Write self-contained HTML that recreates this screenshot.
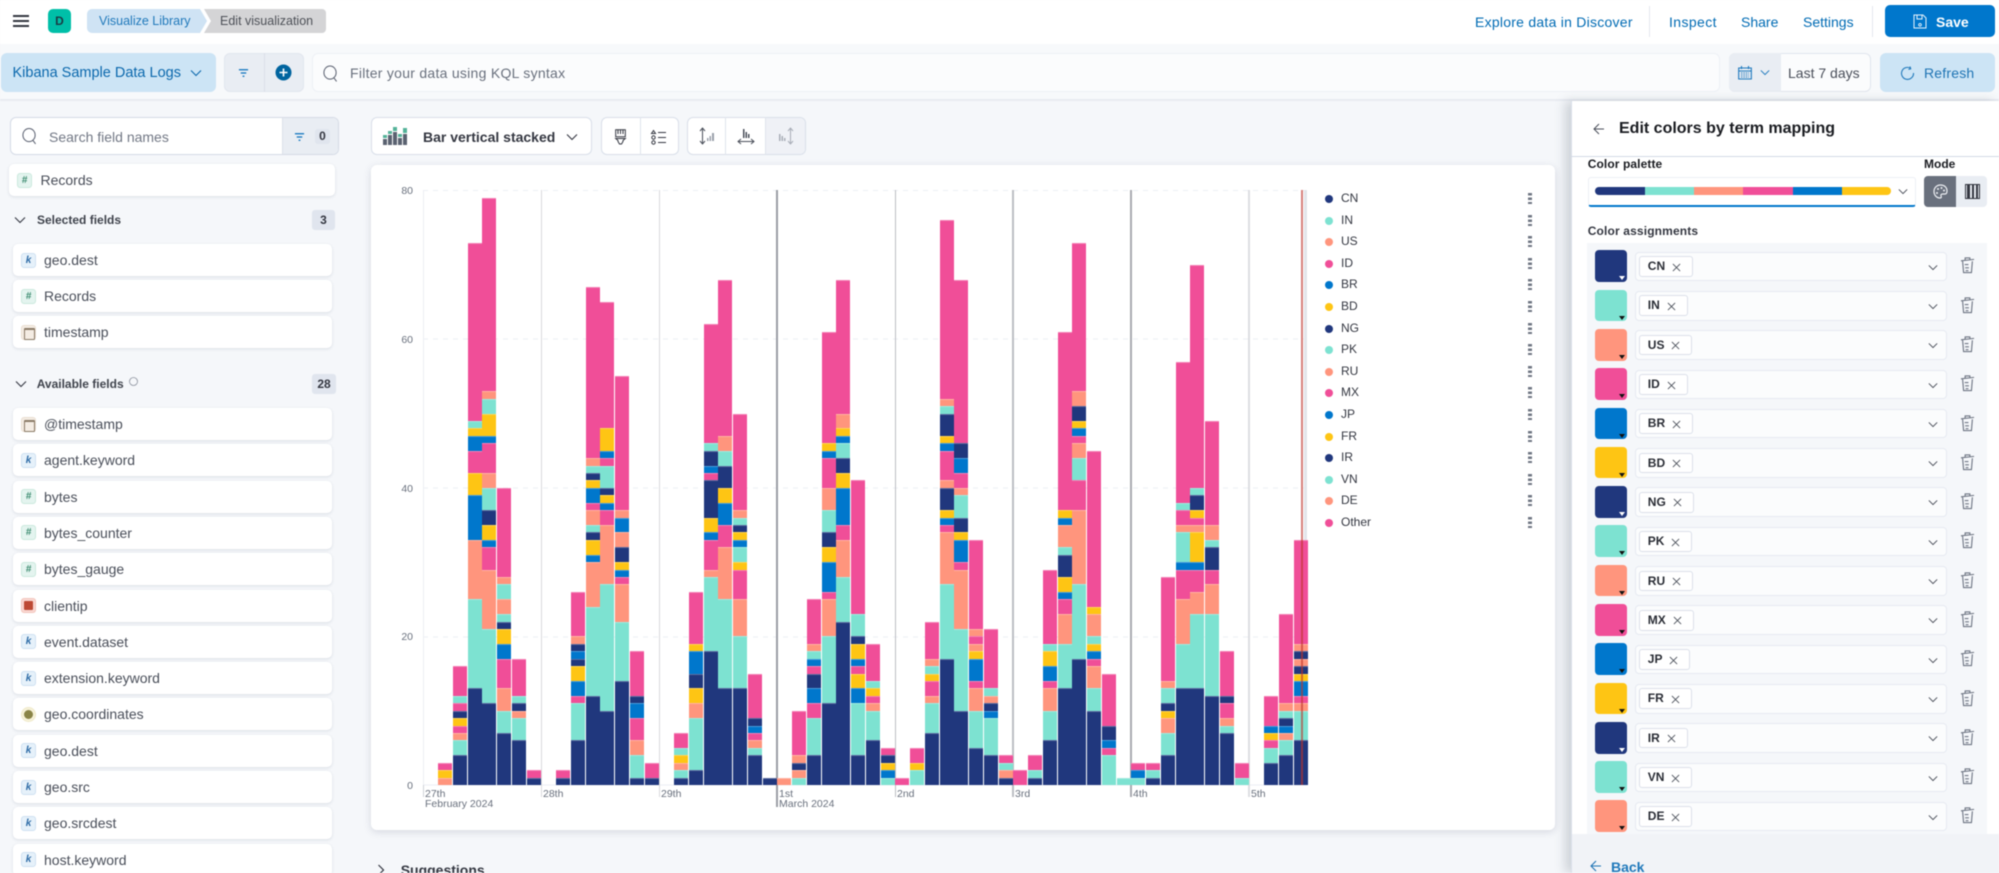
<!DOCTYPE html>
<html lang="en"><head><meta charset="utf-8"><title>Edit visualization</title>
<style>
*{box-sizing:border-box}
html,body{margin:0;padding:0;width:1999px;height:873px;overflow:hidden;background:#f5f7fa}
body{font-family:"Liberation Sans",sans-serif;color:#343741;position:relative}
#p{position:absolute;left:0;top:0;width:1999px;height:873px;overflow:hidden;filter:blur(.4px)}
.a{position:absolute}
.t{position:absolute;white-space:nowrap;line-height:1;transform:translateY(-50%)}
.lnk{color:#006bb4;font-size:14px}
svg{position:absolute;overflow:visible}
.bx{position:absolute;background:#fff;border:1px solid #d9dfe9;border-radius:6px}
.card{position:absolute;left:12.5px;width:319px;height:32px;background:#fff;border-radius:5px;box-shadow:0 1px 3px rgba(60,70,100,.14);font-size:14px;color:#4a4f5a}
.nm{position:absolute;left:31.5px;top:50%;transform:translateY(-50%);white-space:nowrap}
.fi{position:absolute;left:8.5px;top:8.5px;width:15px;height:15px;border-radius:3px;font-size:10px;font-weight:bold;font-style:italic;text-align:center;line-height:14px;border:1px solid}
.k{background:#e6f1fa;border-color:#cfe1f2;color:#2d6ba6}
.h{background:#e4f4ef;border-color:#cbe9de;color:#3b8b6f}
.d{background:#f4ece3;border-color:#eadfd2}
.d:after{content:"";position:absolute;left:2px;top:2px;width:9px;height:9px;border:1.2px solid #8a7a66;border-top-width:2.5px;border-radius:1px}
.ip{background:#f9d8d2;border-color:#f3c5bd}
.ip:after{content:"";position:absolute;left:2px;top:2px;width:9px;height:9px;background:#bd4a35;border-radius:1px}
.g{background:#f7f2da;border-color:#efe9c8;border-radius:50%}
.g:after{content:"";position:absolute;left:2px;top:2px;width:9px;height:9px;background:#8a8447;border-radius:50%}
.b{position:absolute;left:calc(423.3px + var(--s)*14.75px);bottom:88px;width:14.2px;display:flex;flex-direction:column-reverse}
.b i{display:block;flex:none;height:calc(var(--h)*7.43px);border-top:1px solid rgba(255,255,255,.28)}
.n{background:#20377d}.e{background:#7de2d1}.o{background:#ff957d}.q{background:#f04e98}.u{background:#0077cc}.y{background:#fec514}
.dl{position:absolute;top:190px;width:1.3px}
.ax{position:absolute;font-size:10.5px;color:#69707d;white-space:nowrap;line-height:1;transform:translateY(-50%)}
#lg{position:absolute;left:1325px;top:188px;width:210px;display:grid;grid-auto-rows:21.6px;font-size:12px;color:#343741}
#lg div{position:relative;line-height:21.6px;padding-left:16px}
#lg i{position:absolute;left:0;top:7px;width:8px;height:8px;border-radius:50%}
#lg b{position:absolute;left:202.5px;top:5px;width:4px;height:12px;background:repeating-linear-gradient(#6f7683 0 2.4px,transparent 2.4px 4.4px)}
.r{position:absolute;left:1595px;width:390px;height:32px}
.sw{position:absolute;left:0;top:0;width:32px;height:31.7px;border-radius:4px}
.sw:after{content:"";position:absolute;left:23.5px;top:26px;border:3px solid transparent;border-top:4px solid #111;border-bottom:0}
.sw.n:after{border-top-color:#fff}
.cb{position:absolute;left:40.3px;top:1.4px;width:312px;height:29.6px;background:#fbfcfd;border:1px solid #e6eaf1;border-radius:4px}
.ch{position:absolute;left:3px;top:3.5px;height:20.7px;background:#fff;border:1px solid #dbe0ea;border-radius:3px;font-size:12px;font-weight:bold;color:#2a2d35;line-height:19px;padding:0 27px 0 7.5px}
</style></head><body><div id="p">
<svg width="0" height="0" style="position:absolute"><defs>
<symbol id="cv" viewBox="0 0 12 8"><path d="M1 1.5l5 5 5-5" fill="none" stroke="currentColor" stroke-width="1.1"/></symbol>
<symbol id="xx" viewBox="0 0 10 10"><path d="M1 1l8 8M9 1l-8 8" fill="none" stroke="#4f545e" stroke-width="1"/></symbol>
<symbol id="tr" viewBox="0 0 16 18"><path d="M1 4.5l14-1.5M5.5 3.6V1.4h5v1.6M2.8 5l1 12h8.4l1-12M5 8.5h4M5.5 12h4M6 15h3" fill="none" stroke="#6f7684" stroke-width="1.2"/></symbol>
<symbol id="se" viewBox="0 0 16 18"><ellipse cx="7.5" cy="8" rx="6.5" ry="7" fill="none" stroke="#5a6070" stroke-width="1.1"/><path d="M11.5 13.5l3 4" stroke="#5a6070" stroke-width="1.1"/></symbol>
<symbol id="fl" viewBox="0 0 12 10"><path d="M1 1.5h10M3 5h6M5 8.5h2" stroke="#0a72bd" stroke-width="1.4" fill="none"/></symbol>
</defs></svg>

<!-- top bar -->
<div class="a" style="left:0;top:0;width:1999px;height:44px;background:#fff;box-shadow:0 1px 4px rgba(60,70,100,.25)"></div>
<svg style="left:12.5px;top:15px" width="16" height="12"><path d="M0 1h16M0 6h16M0 11h16" stroke="#343741" stroke-width="2"/></svg>
<div class="a" style="left:48px;top:9px;width:23px;height:24px;background:#00bfa8;border-radius:5px;font-size:12px;font-weight:bold;text-align:center;line-height:24px;color:#1a3a44">D</div>
<svg style="left:87px;top:9px" width="240" height="24"><path d="M5 0H113L120 12L113 24H5a5 5 0 0 1-5-5V5a5 5 0 0 1 5-5z" fill="#cfe3f4"/><path d="M117 0H235a4 4 0 0 1 4 4V20a4 4 0 0 1-4 4H117L124 12z" fill="#d4d4d6"/></svg>
<div class="t" style="left:99px;top:21px;font-size:12.5px;color:#2079bb">Visualize Library</div>
<div class="t" style="left:220px;top:21px;font-size:12.5px;color:#4d5057">Edit visualization</div>
<div class="t lnk" style="left:1475px;top:21.5px;letter-spacing:.25px">Explore data in Discover</div>
<div class="a" style="left:1649px;top:6px;width:1px;height:31px;background:#e3e7ee"></div>
<div class="t lnk" style="left:1669px;top:21.5px;letter-spacing:.4px">Inspect</div>
<div class="t lnk" style="left:1741px;top:21.5px">Share</div>
<div class="t lnk" style="left:1803px;top:21.5px">Settings</div>
<div class="a" style="left:1872px;top:6px;width:1px;height:31px;background:#e3e7ee"></div>
<div class="a" style="left:1885px;top:5px;width:110px;height:32px;background:#0077cc;border-radius:5px"></div>
<svg style="left:1913px;top:14px" width="14" height="15"><path d="M1 1h9l3 3v10H1zM4 1v4h5V1M7 9.5a1.3 1.3 0 1 0 .01 0" fill="none" stroke="#e8f3fb" stroke-width="1"/></svg>
<div class="t" style="left:1936px;top:21.5px;font-size:14px;font-weight:bold;color:#fff">Save</div>

<!-- query bar -->
<div class="a" style="left:0;top:44px;width:1999px;height:57px;background:#f7f9fb;border-bottom:2px solid #e8ebf1"></div>
<div class="a" style="left:1px;top:53px;width:215px;height:39px;background:#cce4f5;border-radius:6px"></div>
<div class="t" style="left:12.5px;top:73px;font-size:14.5px;color:#0b68ad">Kibana Sample Data Logs</div>
<svg style="left:190px;top:69px;color:#0b68ad" width="12" height="8"><use href="#cv"/></svg>
<div class="a" style="left:224px;top:53px;width:80px;height:39px;background:#e9edf3;border:1px solid #e1e6ee;border-radius:6px"></div>
<div class="a" style="left:264px;top:53px;width:1px;height:39px;background:#dbe0e9"></div>
<svg style="left:238px;top:68px" width="11" height="10"><use href="#fl"/></svg>
<svg style="left:275px;top:64px" width="17" height="17"><circle cx="8.5" cy="8.5" r="8" fill="#00649f"/><path d="M8.5 4.5v8M4.5 8.5h8" stroke="#fff" stroke-width="1.6"/></svg>
<div class="a" style="left:312px;top:53px;width:1408px;height:39px;background:#fbfcfd;border:1px solid #eef1f6;border-radius:6px"></div>
<svg style="left:323px;top:65px" width="15" height="17"><use href="#se"/></svg>
<div class="t" style="left:350px;top:73px;font-size:14px;color:#69707d;letter-spacing:.27px">Filter your data using KQL syntax</div>
<div class="a" style="left:1729px;top:53px;width:142px;height:39px;background:#fbfcfd;border:1px solid #e1e6ee;border-radius:6px"></div>
<div class="a" style="left:1729px;top:53px;width:52px;height:39px;background:#e9edf3;border-radius:6px 0 0 6px"></div>
<svg style="left:1738px;top:65px" width="14" height="15"><path d="M.7 3h12.6v11H.7zM.7 6h12.6M3.5 1v3M10.5 1v3" fill="none" stroke="#1c78bd" stroke-width="1.1"/><path d="M3 8h8M3 10h8M3 12h8" stroke="#1c78bd" stroke-dasharray="1.4 1"/></svg>
<svg style="left:1760px;top:69px;color:#1c78bd" width="10" height="7"><use href="#cv"/></svg>
<div class="t" style="left:1788px;top:73px;font-size:14px;color:#4a4f5a">Last 7 days</div>
<div class="a" style="left:1880px;top:53px;width:115px;height:39px;background:#cce4f5;border-radius:6px"></div>
<svg style="left:1901px;top:66px" width="13" height="14"><path d="M9.5 2.2A6 6 0 1 0 12.5 7M9 .5l.7 2.3-2.3.6" fill="none" stroke="#2079bb" stroke-width="1.1"/></svg>
<div class="t" style="left:1924px;top:73px;font-size:14px;color:#1f74b4;letter-spacing:.2px">Refresh</div>

<!-- left panel -->
<div class="bx" style="left:10px;top:117px;width:329px;height:38px;overflow:hidden;border-color:#d5dbe6"><div class="a" style="left:271px;top:0;width:58px;height:38px;background:#e9edf3;border-left:1px solid #dde2ea"></div></div>
<svg style="left:22px;top:127px" width="15" height="18"><use href="#se"/></svg>
<div class="t" style="left:49px;top:136.5px;font-size:14px;color:#727885">Search field names</div>
<svg style="left:294px;top:132px" width="11" height="10"><use href="#fl"/></svg>
<div class="a" style="left:315px;top:129px;width:15px;height:15px;background:#e0e5ee;border-radius:3px;font-size:12px;font-weight:bold;text-align:center;line-height:15px;color:#343741">0</div>

<div class="card" style="left:9px;top:164px;width:326px"><span class="fi h" style="left:8px">#</span><span class="nm">Records</span></div>
<svg style="left:14px;top:216px;color:#343741" width="12" height="8"><use href="#cv"/></svg>
<div class="t" style="left:37px;top:219.5px;font-size:12px;font-weight:bold;color:#3f434c">Selected fields</div>
<div class="a" style="left:312px;top:210px;width:23px;height:20px;background:#e0e5ee;border-radius:3px;font-size:12px;font-weight:bold;text-align:center;line-height:20px">3</div>
<div class="card" style="top:244px"><span class="fi k">k</span><span class="nm">geo.dest</span></div>
<div class="card" style="top:280px"><span class="fi h">#</span><span class="nm">Records</span></div>
<div class="card" style="top:316.4px"><span class="fi d"></span><span class="nm">timestamp</span></div>
<svg style="left:14.5px;top:380px;color:#343741" width="12" height="8"><use href="#cv"/></svg>
<div class="t" style="left:36.7px;top:383.5px;font-size:12px;font-weight:bold;color:#3f434c">Available fields</div>
<svg style="left:129px;top:377px" width="9" height="9"><circle cx="4.5" cy="4.5" r="4" fill="none" stroke="#8a909c" stroke-width=".8"/></svg>
<div class="a" style="left:312px;top:374px;width:24px;height:20px;background:#e0e5ee;border-radius:3px;font-size:12px;font-weight:bold;text-align:center;line-height:20px">28</div>
<div class="card" style="top:408px"><span class="fi d"></span><span class="nm">@timestamp</span></div>
<div class="card" style="top:444.3px"><span class="fi k">k</span><span class="nm">agent.keyword</span></div>
<div class="card" style="top:480.6px"><span class="fi h">#</span><span class="nm">bytes</span></div>
<div class="card" style="top:516.9px"><span class="fi h">#</span><span class="nm">bytes_counter</span></div>
<div class="card" style="top:553.2px"><span class="fi h">#</span><span class="nm">bytes_gauge</span></div>
<div class="card" style="top:589.5px"><span class="fi ip"></span><span class="nm">clientip</span></div>
<div class="card" style="top:625.8px"><span class="fi k">k</span><span class="nm">event.dataset</span></div>
<div class="card" style="top:662.1px"><span class="fi k">k</span><span class="nm">extension.keyword</span></div>
<div class="card" style="top:698.4px"><span class="fi g"></span><span class="nm">geo.coordinates</span></div>
<div class="card" style="top:734.7px"><span class="fi k">k</span><span class="nm">geo.dest</span></div>
<div class="card" style="top:771px"><span class="fi k">k</span><span class="nm">geo.src</span></div>
<div class="card" style="top:807.3px"><span class="fi k">k</span><span class="nm">geo.srcdest</span></div>
<div class="card" style="top:843.6px"><span class="fi k">k</span><span class="nm">host.keyword</span></div>

<!-- toolbar -->
<div class="bx" style="left:371px;top:117px;width:221px;height:38px"></div>
<svg style="left:383px;top:127px" width="24" height="18"><path d="M0 8h4v3H0zM5 4h4v3H5zM10 0h4v4h-4zM15 7h4v3h-4zM20 1h4v5h-4z" fill="#54b399"/><path d="M0 12h4v6H0zM5 8h4v10H5zM10 5h4v13h-4zM15 11h4v7h-4zM20 7h4v11h-4z" fill="#5a6270"/></svg>
<div class="t" style="left:423px;top:136.5px;font-size:14px;font-weight:bold;color:#343741">Bar vertical stacked</div>
<svg style="left:566px;top:133px;color:#343741" width="12" height="8"><use href="#cv"/></svg>
<div class="bx" style="left:601px;top:117px;width:78px;height:38px"></div>
<div class="a" style="left:640px;top:117px;width:1px;height:38px;background:#dfe4ec"></div>
<svg style="left:615px;top:129px" width="11" height="16"><path d="M.7.7h9.6v7H.7zM.7 9.5h9.6L8 11.5v1L6.5 15h-2L3 12.5v-1z" fill="none" stroke="#343741" stroke-width="1"/><path d="M3 1v4M5.5 1v4M8 1v4" stroke="#343741"/></svg>
<svg style="left:651px;top:130px" width="16" height="15"><circle cx="2.5" cy="7.5" r="1.7" fill="none" stroke="#343741"/><circle cx="2.5" cy="12.5" r="1.7" fill="none" stroke="#343741"/><path d="M2.5.5l2 3h-4zM7 2.5h8M7 7.5h8M7 12.5h8" fill="none" stroke="#343741"/></svg>
<div class="bx" style="left:687px;top:117px;width:119px;height:38px;overflow:hidden"><div class="a" style="left:78px;top:0;width:41px;height:38px;background:#eff1f6"></div></div>
<div class="a" style="left:725px;top:117px;width:1px;height:38px;background:#dfe4ec"></div>
<div class="a" style="left:765px;top:117px;width:1px;height:38px;background:#dfe4ec"></div>
<svg style="left:699px;top:127px" width="18" height="18"><path d="M3.5 1.5v15M1 4l2.5-3L6 4M1 14l2.5 3L6 14" fill="none" stroke="#4a4f5a"/><path d="M8 11h1.5v3H8zM10.5 9H12v5h-1.500zM13 6h2v8h-2z" fill="#9aa0ab"/></svg>
<svg style="left:737px;top:128px" width="18" height="18"><path d="M1 13.500h16M4 11l-3 2.500L4 16M14 11l3 2.500L14 16" fill="none" stroke="#4a4f5a"/><path d="M6 1h1.500v9H6zM8.500 4H10v6H8.500zM11 6h1.500v4H11z" fill="#4a4f5a"/></svg>
<svg style="left:778px;top:127px" width="18" height="18"><path d="M12.500 1.500v15M10 4l2.500-3L15 4M10 14l2.500 3L15 14" fill="none" stroke="#a8adb7"/><path d="M1 7h1.500v7H1zM3.500 9H5v5H3.500zM6 11h1.500v3H6z" fill="#a8adb7"/></svg>

<!-- chart panel -->
<div class="a" style="left:371px;top:165px;width:1184px;height:665px;background:#fff;border-radius:6px;box-shadow:0 2px 8px rgba(70,80,110,.18)"></div>
<svg style="left:0;top:0" width="1999" height="873">
<path d="M423 190.500H1307M423 339H1307M423 488H1307M423 637H1307" stroke="#edeff4" stroke-dasharray="5 5"/>
<path d="M423.500 190V785" stroke="#eceef3"/><path d="M423 785H1307" stroke="#eceef3"/>
</svg>
<div class="a" style="left:423px;top:785px;width:1px;height:12px;background:#cfd2d8"></div>
<div class="dl" style="left:540.800px;height:607px;background:#d9d9dc"></div>
<div class="dl" style="left:658.700px;height:607px;background:#d9d9dc"></div>
<div class="dl" style="left:776.400px;height:617px;background:#9b9ea5"></div>
<div class="dl" style="left:894.500px;height:607px;background:#bcbec3"></div>
<div class="dl" style="left:1012.400px;height:607px;background:#bcbec3"></div>
<div class="dl" style="left:1130.400px;height:607px;background:#a9abb1"></div>
<div class="dl" style="left:1248.400px;height:607px;background:#dddee2"></div>
<div class="a" style="left:1304px;top:190px;width:3px;height:360px;background:#e3e5ea"></div>

<div class="ax" style="right:1586px;top:191px">80</div>
<div class="ax" style="right:1586px;top:340px">60</div>
<div class="ax" style="right:1586px;top:488.500px">40</div>
<div class="ax" style="right:1586px;top:637px">20</div>
<div class="ax" style="right:1586px;top:786px">0</div>
<div class="ax" style="left:425px;top:793.500px">27th</div>
<div class="ax" style="left:425px;top:803.500px">February 2024</div>
<div class="ax" style="left:543px;top:793.500px">28th</div>
<div class="ax" style="left:661px;top:793.500px">29th</div>
<div class="ax" style="left:779px;top:793.500px">1st</div>
<div class="ax" style="left:779px;top:803.500px">March 2024</div>
<div class="ax" style="left:897px;top:793.500px">2nd</div>
<div class="ax" style="left:1015px;top:793.500px">3rd</div>
<div class="ax" style="left:1133px;top:793.500px">4th</div>
<div class="ax" style="left:1251px;top:793.500px">5th</div>

<!-- bars -->
<div class="b" style="--s:1"><i class="o" style="--h:1"></i><i class="y" style="--h:1"></i><i class="q" style="--h:1"></i></div>
<div class="b" style="--s:2"><i class="n" style="--h:4"></i><i class="e" style="--h:2"></i><i class="o" style="--h:1"></i><i class="q" style="--h:1"></i><i class="y" style="--h:1"></i><i class="n" style="--h:1"></i><i class="q" style="--h:1"></i><i class="e" style="--h:1"></i><i class="q" style="--h:4"></i></div>
<div class="b" style="--s:3"><i class="n" style="--h:13"></i><i class="e" style="--h:12"></i><i class="o" style="--h:8"></i><i class="u" style="--h:6"></i><i class="y" style="--h:3"></i><i class="q" style="--h:3"></i><i class="u" style="--h:2"></i><i class="y" style="--h:1"></i><i class="e" style="--h:1"></i><i class="q" style="--h:24"></i></div>
<div class="b" style="--s:4"><i class="n" style="--h:11"></i><i class="e" style="--h:10"></i><i class="o" style="--h:8"></i><i class="q" style="--h:3"></i><i class="u" style="--h:1"></i><i class="y" style="--h:2"></i><i class="n" style="--h:2"></i><i class="e" style="--h:3"></i><i class="o" style="--h:2"></i><i class="q" style="--h:4"></i><i class="u" style="--h:1"></i><i class="y" style="--h:3"></i><i class="e" style="--h:2"></i><i class="o" style="--h:1"></i><i class="q" style="--h:26"></i></div>
<div class="b" style="--s:5"><i class="n" style="--h:7"></i><i class="e" style="--h:3"></i><i class="o" style="--h:3"></i><i class="q" style="--h:4"></i><i class="u" style="--h:2"></i><i class="y" style="--h:2"></i><i class="n" style="--h:1"></i><i class="e" style="--h:1"></i><i class="o" style="--h:2"></i><i class="e" style="--h:2"></i><i class="o" style="--h:1"></i><i class="q" style="--h:12"></i></div>
<div class="b" style="--s:6"><i class="n" style="--h:6"></i><i class="e" style="--h:3"></i><i class="o" style="--h:1"></i><i class="n" style="--h:1"></i><i class="e" style="--h:1"></i><i class="q" style="--h:5"></i></div>
<div class="b" style="--s:7"><i class="n" style="--h:1"></i><i class="q" style="--h:1"></i></div>
<div class="b" style="--s:9"><i class="n" style="--h:1"></i><i class="q" style="--h:1"></i></div>
<div class="b" style="--s:10"><i class="n" style="--h:6"></i><i class="e" style="--h:5"></i><i class="q" style="--h:1"></i><i class="u" style="--h:2"></i><i class="y" style="--h:2"></i><i class="n" style="--h:1"></i><i class="u" style="--h:1"></i><i class="n" style="--h:1"></i><i class="o" style="--h:1"></i><i class="q" style="--h:6"></i></div>
<div class="b" style="--s:11"><i class="n" style="--h:12"></i><i class="e" style="--h:12"></i><i class="o" style="--h:6"></i><i class="u" style="--h:1"></i><i class="y" style="--h:2"></i><i class="n" style="--h:1"></i><i class="e" style="--h:1"></i><i class="o" style="--h:2"></i><i class="q" style="--h:1"></i><i class="u" style="--h:2"></i><i class="y" style="--h:1"></i><i class="n" style="--h:1"></i><i class="e" style="--h:1"></i><i class="o" style="--h:1"></i><i class="q" style="--h:23"></i></div>
<div class="b" style="--s:12"><i class="n" style="--h:10"></i><i class="e" style="--h:17"></i><i class="o" style="--h:8"></i><i class="q" style="--h:2"></i><i class="u" style="--h:1"></i><i class="y" style="--h:1"></i><i class="n" style="--h:1"></i><i class="e" style="--h:3"></i><i class="q" style="--h:1"></i><i class="u" style="--h:1"></i><i class="y" style="--h:3"></i><i class="q" style="--h:17"></i></div>
<div class="b" style="--s:13"><i class="n" style="--h:14"></i><i class="e" style="--h:8"></i><i class="o" style="--h:5"></i><i class="q" style="--h:1"></i><i class="u" style="--h:1"></i><i class="y" style="--h:1"></i><i class="n" style="--h:2"></i><i class="o" style="--h:2"></i><i class="u" style="--h:2"></i><i class="o" style="--h:1"></i><i class="q" style="--h:18"></i></div>
<div class="b" style="--s:14"><i class="n" style="--h:1"></i><i class="e" style="--h:3"></i><i class="o" style="--h:2"></i><i class="q" style="--h:3"></i><i class="u" style="--h:2"></i><i class="n" style="--h:1"></i><i class="q" style="--h:6"></i></div>
<div class="b" style="--s:15"><i class="n" style="--h:1"></i><i class="q" style="--h:2"></i></div>
<div class="b" style="--s:17"><i class="n" style="--h:1"></i><i class="e" style="--h:1"></i><i class="o" style="--h:1"></i><i class="y" style="--h:1"></i><i class="e" style="--h:1"></i><i class="q" style="--h:2"></i></div>
<div class="b" style="--s:18"><i class="n" style="--h:2"></i><i class="e" style="--h:7"></i><i class="o" style="--h:2"></i><i class="y" style="--h:2"></i><i class="n" style="--h:2"></i><i class="u" style="--h:3"></i><i class="y" style="--h:1"></i><i class="q" style="--h:7"></i></div>
<div class="b" style="--s:19"><i class="n" style="--h:18"></i><i class="e" style="--h:10"></i><i class="o" style="--h:1"></i><i class="q" style="--h:4"></i><i class="u" style="--h:1"></i><i class="y" style="--h:2"></i><i class="n" style="--h:5"></i><i class="q" style="--h:1"></i><i class="u" style="--h:1"></i><i class="n" style="--h:2"></i><i class="e" style="--h:1"></i><i class="q" style="--h:16"></i></div>
<div class="b" style="--s:20"><i class="n" style="--h:13"></i><i class="e" style="--h:12"></i><i class="o" style="--h:7"></i><i class="q" style="--h:3"></i><i class="u" style="--h:3"></i><i class="y" style="--h:2"></i><i class="n" style="--h:3"></i><i class="e" style="--h:2"></i><i class="o" style="--h:2"></i><i class="q" style="--h:21"></i></div>
<div class="b" style="--s:21"><i class="n" style="--h:13"></i><i class="e" style="--h:7"></i><i class="o" style="--h:5"></i><i class="q" style="--h:4"></i><i class="y" style="--h:1"></i><i class="e" style="--h:2"></i><i class="u" style="--h:1"></i><i class="y" style="--h:1"></i><i class="n" style="--h:1"></i><i class="e" style="--h:1"></i><i class="o" style="--h:1"></i><i class="q" style="--h:13"></i></div>
<div class="b" style="--s:22"><i class="n" style="--h:4"></i><i class="e" style="--h:1"></i><i class="o" style="--h:1"></i><i class="q" style="--h:1"></i><i class="u" style="--h:1"></i><i class="n" style="--h:1"></i><i class="q" style="--h:6"></i></div>
<div class="b" style="--s:23"><i class="n" style="--h:1"></i></div>
<div class="b" style="--s:24"><i class="o" style="--h:1"></i></div>
<div class="b" style="--s:25"><i class="e" style="--h:1"></i><i class="o" style="--h:1"></i><i class="n" style="--h:1"></i><i class="o" style="--h:1"></i><i class="q" style="--h:6"></i></div>
<div class="b" style="--s:26"><i class="n" style="--h:4"></i><i class="e" style="--h:5"></i><i class="q" style="--h:2"></i><i class="u" style="--h:2"></i><i class="n" style="--h:2"></i><i class="q" style="--h:1"></i><i class="u" style="--h:1"></i><i class="e" style="--h:1"></i><i class="o" style="--h:1"></i><i class="q" style="--h:6"></i></div>
<div class="b" style="--s:27"><i class="n" style="--h:11"></i><i class="e" style="--h:9"></i><i class="o" style="--h:5"></i><i class="q" style="--h:1"></i><i class="u" style="--h:4"></i><i class="y" style="--h:2"></i><i class="n" style="--h:2"></i><i class="e" style="--h:3"></i><i class="o" style="--h:3"></i><i class="q" style="--h:4"></i><i class="u" style="--h:1"></i><i class="y" style="--h:1"></i><i class="q" style="--h:15"></i></div>
<div class="b" style="--s:28"><i class="n" style="--h:22"></i><i class="e" style="--h:6"></i><i class="o" style="--h:5"></i><i class="q" style="--h:2"></i><i class="u" style="--h:5"></i><i class="y" style="--h:2"></i><i class="n" style="--h:2"></i><i class="e" style="--h:2"></i><i class="u" style="--h:1"></i><i class="y" style="--h:1"></i><i class="o" style="--h:2"></i><i class="q" style="--h:18"></i></div>
<div class="b" style="--s:29"><i class="n" style="--h:4"></i><i class="e" style="--h:7"></i><i class="u" style="--h:2"></i><i class="y" style="--h:2"></i><i class="q" style="--h:1"></i><i class="u" style="--h:1"></i><i class="y" style="--h:2"></i><i class="n" style="--h:1"></i><i class="e" style="--h:3"></i><i class="q" style="--h:18"></i></div>
<div class="b" style="--s:30"><i class="n" style="--h:6"></i><i class="e" style="--h:4"></i><i class="o" style="--h:1"></i><i class="q" style="--h:1"></i><i class="y" style="--h:1"></i><i class="e" style="--h:1"></i><i class="q" style="--h:5"></i></div>
<div class="b" style="--s:31"><i class="e" style="--h:1"></i><i class="u" style="--h:1"></i><i class="y" style="--h:1"></i><i class="n" style="--h:1"></i><i class="q" style="--h:1"></i></div>
<div class="b" style="--s:32"><i class="q" style="--h:1"></i></div>
<div class="b" style="--s:33"><i class="e" style="--h:2"></i><i class="y" style="--h:1"></i><i class="q" style="--h:2"></i></div>
<div class="b" style="--s:34"><i class="n" style="--h:7"></i><i class="e" style="--h:4"></i><i class="o" style="--h:1"></i><i class="q" style="--h:2"></i><i class="y" style="--h:1"></i><i class="e" style="--h:1"></i><i class="o" style="--h:1"></i><i class="q" style="--h:5"></i></div>
<div class="b" style="--s:35"><i class="n" style="--h:17"></i><i class="e" style="--h:10"></i><i class="o" style="--h:7"></i><i class="q" style="--h:1"></i><i class="u" style="--h:1"></i><i class="y" style="--h:1"></i><i class="n" style="--h:3"></i><i class="o" style="--h:1"></i><i class="q" style="--h:4"></i><i class="u" style="--h:1"></i><i class="y" style="--h:1"></i><i class="n" style="--h:3"></i><i class="e" style="--h:1"></i><i class="o" style="--h:1"></i><i class="q" style="--h:24"></i></div>
<div class="b" style="--s:36"><i class="n" style="--h:10"></i><i class="e" style="--h:11"></i><i class="o" style="--h:8"></i><i class="q" style="--h:1"></i><i class="u" style="--h:3"></i><i class="y" style="--h:1"></i><i class="n" style="--h:2"></i><i class="e" style="--h:3"></i><i class="o" style="--h:1"></i><i class="q" style="--h:2"></i><i class="u" style="--h:2"></i><i class="n" style="--h:2"></i><i class="q" style="--h:22"></i></div>
<div class="b" style="--s:37"><i class="n" style="--h:5"></i><i class="e" style="--h:5"></i><i class="o" style="--h:3"></i><i class="q" style="--h:1"></i><i class="u" style="--h:3"></i><i class="y" style="--h:1"></i><i class="o" style="--h:1"></i><i class="q" style="--h:1"></i><i class="o" style="--h:1"></i><i class="q" style="--h:12"></i></div>
<div class="b" style="--s:38"><i class="n" style="--h:4"></i><i class="e" style="--h:5"></i><i class="u" style="--h:1"></i><i class="n" style="--h:1"></i><i class="o" style="--h:1"></i><i class="e" style="--h:1"></i><i class="q" style="--h:8"></i></div>
<div class="b" style="--s:39"><i class="n" style="--h:1"></i><i class="o" style="--h:1"></i><i class="e" style="--h:1"></i><i class="q" style="--h:1"></i></div>
<div class="b" style="--s:40"><i class="q" style="--h:2"></i></div>
<div class="b" style="--s:41"><i class="n" style="--h:1"></i><i class="e" style="--h:1"></i><i class="q" style="--h:2"></i></div>
<div class="b" style="--s:42"><i class="n" style="--h:6"></i><i class="e" style="--h:4"></i><i class="o" style="--h:3"></i><i class="q" style="--h:1"></i><i class="u" style="--h:2"></i><i class="y" style="--h:2"></i><i class="e" style="--h:1"></i><i class="q" style="--h:10"></i></div>
<div class="b" style="--s:43"><i class="n" style="--h:13"></i><i class="e" style="--h:6"></i><i class="o" style="--h:4"></i><i class="q" style="--h:2"></i><i class="u" style="--h:1"></i><i class="y" style="--h:2"></i><i class="n" style="--h:3"></i><i class="e" style="--h:1"></i><i class="o" style="--h:3"></i><i class="u" style="--h:1"></i><i class="y" style="--h:1"></i><i class="q" style="--h:24"></i></div>
<div class="b" style="--s:44"><i class="n" style="--h:17"></i><i class="e" style="--h:10"></i><i class="o" style="--h:10"></i><i class="q" style="--h:4"></i><i class="e" style="--h:3"></i><i class="o" style="--h:2"></i><i class="q" style="--h:1"></i><i class="u" style="--h:1"></i><i class="y" style="--h:1"></i><i class="n" style="--h:2"></i><i class="o" style="--h:2"></i><i class="q" style="--h:20"></i></div>
<div class="b" style="--s:45"><i class="n" style="--h:10"></i><i class="e" style="--h:3"></i><i class="o" style="--h:3"></i><i class="q" style="--h:1"></i><i class="u" style="--h:1"></i><i class="y" style="--h:1"></i><i class="e" style="--h:1"></i><i class="o" style="--h:3"></i><i class="y" style="--h:1"></i><i class="q" style="--h:21"></i></div>
<div class="b" style="--s:46"><i class="e" style="--h:4"></i><i class="q" style="--h:1"></i><i class="u" style="--h:1"></i><i class="n" style="--h:2"></i><i class="q" style="--h:7"></i></div>
<div class="b" style="--s:47"><i class="e" style="--h:1"></i></div>
<div class="b" style="--s:48"><i class="e" style="--h:1"></i><i class="u" style="--h:1"></i><i class="q" style="--h:1"></i></div>
<div class="b" style="--s:49"><i class="n" style="--h:1"></i><i class="e" style="--h:1"></i><i class="q" style="--h:1"></i></div>
<div class="b" style="--s:50"><i class="n" style="--h:4"></i><i class="e" style="--h:3"></i><i class="o" style="--h:2"></i><i class="y" style="--h:1"></i><i class="n" style="--h:1"></i><i class="e" style="--h:2"></i><i class="o" style="--h:1"></i><i class="q" style="--h:14"></i></div>
<div class="b" style="--s:51"><i class="n" style="--h:13"></i><i class="e" style="--h:6"></i><i class="o" style="--h:6"></i><i class="q" style="--h:4"></i><i class="u" style="--h:1"></i><i class="e" style="--h:4"></i><i class="o" style="--h:1"></i><i class="q" style="--h:2"></i><i class="e" style="--h:1"></i><i class="q" style="--h:19"></i></div>
<div class="b" style="--s:52"><i class="n" style="--h:13"></i><i class="e" style="--h:10"></i><i class="o" style="--h:3"></i><i class="q" style="--h:3"></i><i class="u" style="--h:1"></i><i class="y" style="--h:4"></i><i class="o" style="--h:1"></i><i class="q" style="--h:1"></i><i class="y" style="--h:1"></i><i class="n" style="--h:2"></i><i class="e" style="--h:1"></i><i class="q" style="--h:30"></i></div>
<div class="b" style="--s:53"><i class="n" style="--h:12"></i><i class="e" style="--h:11"></i><i class="o" style="--h:4"></i><i class="q" style="--h:2"></i><i class="n" style="--h:3"></i><i class="e" style="--h:1"></i><i class="o" style="--h:2"></i><i class="q" style="--h:14"></i></div>
<div class="b" style="--s:54"><i class="n" style="--h:7"></i><i class="e" style="--h:1"></i><i class="o" style="--h:1"></i><i class="q" style="--h:2"></i><i class="n" style="--h:1"></i><i class="q" style="--h:6"></i></div>
<div class="b" style="--s:55"><i class="e" style="--h:1"></i><i class="q" style="--h:2"></i></div>
<div class="b" style="--s:57"><i class="n" style="--h:3"></i><i class="e" style="--h:2"></i><i class="q" style="--h:1"></i><i class="y" style="--h:1"></i><i class="u" style="--h:1"></i><i class="q" style="--h:4"></i></div>
<div class="b" style="--s:58"><i class="n" style="--h:4"></i><i class="e" style="--h:2"></i><i class="o" style="--h:1"></i><i class="u" style="--h:1"></i><i class="n" style="--h:1"></i><i class="e" style="--h:1"></i><i class="o" style="--h:1"></i><i class="q" style="--h:12"></i></div>
<div class="b" style="--s:59"><i class="n" style="--h:6"></i><i class="e" style="--h:4"></i><i class="o" style="--h:1"></i><i class="q" style="--h:1"></i><i class="u" style="--h:2"></i><i class="y" style="--h:1"></i><i class="n" style="--h:1"></i><i class="o" style="--h:1"></i><i class="n" style="--h:1"></i><i class="o" style="--h:1"></i><i class="q" style="--h:14"></i></div>
<div class="a" style="left:1301px;top:190px;width:2px;height:595px;background:rgba(190,50,40,.62)"></div>

<!-- legend -->
<div id="lg">
<div><i class="n"></i>CN<b></b></div><div><i class="e"></i>IN<b></b></div><div><i class="o"></i>US<b></b></div><div><i class="q"></i>ID<b></b></div>
<div><i class="u"></i>BR<b></b></div><div><i class="y"></i>BD<b></b></div><div><i class="n"></i>NG<b></b></div><div><i class="e"></i>PK<b></b></div>
<div><i class="o"></i>RU<b></b></div><div><i class="q"></i>MX<b></b></div><div><i class="u"></i>JP<b></b></div><div><i class="y"></i>FR<b></b></div>
<div><i class="n"></i>IR<b></b></div><div><i class="e"></i>VN<b></b></div><div><i class="o"></i>DE<b></b></div><div><i class="q"></i>Other<b></b></div>
</div>

<svg style="left:377px;top:864px" width="8" height="12"><path d="M1.500 1l5 5-5 5" fill="none" stroke="#343741" stroke-width="1.200"/></svg>
<div class="t" style="left:400.700px;top:870px;font-size:14px;font-weight:bold;color:#343741">Suggestions</div>

<!-- flyout -->
<div class="a" style="left:1571px;top:101px;width:428px;height:772px;background:#fff;box-shadow:-6px 0 10px rgba(70,80,100,.22);border-left:1px solid #d9dfe9"></div>
<div class="a" style="left:1571px;top:155.500px;width:428px;height:1px;background:#d3dae6"></div>
<svg style="left:1593px;top:123px" width="12" height="12"><path d="M6 1L1 6l5 5M1 6h10" fill="none" stroke="#4a4f5a" stroke-width="1"/></svg>
<div class="t" style="left:1619px;top:128.500px;font-size:16px;font-weight:bold;color:#1a1c21">Edit colors by term mapping</div>
<div class="t" style="left:1587.700px;top:163.500px;font-size:12px;font-weight:bold;color:#1a1c21;letter-spacing:.1px">Color palette</div>
<div class="t" style="left:1924px;top:163.500px;font-size:12px;font-weight:bold;color:#1a1c21">Mode</div>
<div class="a" style="left:1587.700px;top:176.700px;width:328.300px;height:30.500px;background:#fff;border:1px solid #eceff5;border-bottom:2px solid #0077cc;border-radius:3px"></div>
<div class="a" style="left:1595.300px;top:187.300px;width:295.700px;height:8px;border-radius:4px;overflow:hidden;display:flex"><div class="n" style="width:49.300px"></div><div class="e" style="width:49.300px"></div><div class="o" style="width:49.300px"></div><div class="q" style="width:49.700px"></div><div class="u" style="width:49.300px"></div><div class="y" style="width:48.800px"></div></div>
<svg style="left:1898px;top:188px;color:#4a4f5a" width="10" height="7"><use href="#cv"/></svg>
<div class="a" style="left:1924.300px;top:175.700px;width:63px;height:31.600px;background:#e9edf3;border-radius:4px;overflow:hidden"><div class="a" style="left:0;top:0;width:32px;height:32px;background:#69707d"></div></div>
<svg style="left:1933px;top:184px" width="15" height="15"><path d="M7.500 1C3.500 1 1 4 1 7.500S3.500 14 7 14c1.500 0 1.500-1 1-2-.5-1.200.5-2 1.500-2H12c1.500 0 2-1 2-3C14 3.500 11.500 1 7.500 1z" fill="none" stroke="#eef0f4" stroke-width="1.200"/><circle cx="5" cy="5" r="1" fill="#eef0f4"/><circle cx="8.500" cy="4" r="1" fill="#eef0f4"/><circle cx="11" cy="6.500" r="1" fill="#eef0f4"/><circle cx="4" cy="9" r="1" fill="#eef0f4"/></svg>
<svg style="left:1965px;top:184px" width="15" height="15"><path d="M.5.500h14v14H.500z" fill="none" stroke="#343741"/><path d="M2 1h3v13H2zM7 1h2v13H7zM11 1h2v13h-2z" fill="#343741"/></svg>
<div class="t" style="left:1587.700px;top:230.500px;font-size:12px;font-weight:bold;color:#343741;letter-spacing:.15px">Color assignments</div>
<div class="a" style="left:1587.300px;top:242.700px;width:399.700px;height:591.600px;background:#f5f7fa"></div>
<div class="a" style="left:1571px;top:834.300px;width:428px;height:39px;background:#f1f3f7;border-left:1px solid #d9dfe9"></div>
<svg style="left:1590px;top:860px" width="12" height="12"><path d="M6 1L1 6l5 5M1 6h10" fill="none" stroke="#1f74b4" stroke-width="1.100"/></svg>
<div class="t" style="left:1611px;top:866.500px;font-size:14px;font-weight:bold;color:#2079bb">Back</div>

<div class="r" style="top:250.300px"><div class="sw n"></div><div class="cb"><span class="ch">CN<svg style="right:11px;top:5.500px" width="9" height="9"><use href="#xx"/></svg></span><svg style="left:292px;top:11px;color:#4a4f5a" width="10" height="7"><use href="#cv"/></svg></div><svg style="left:364.500px;top:6px" width="15" height="18"><use href="#tr"/></svg></div>
<div class="r" style="top:289.600px"><div class="sw e"></div><div class="cb"><span class="ch">IN<svg style="right:11px;top:5.500px" width="9" height="9"><use href="#xx"/></svg></span><svg style="left:292px;top:11px;color:#4a4f5a" width="10" height="7"><use href="#cv"/></svg></div><svg style="left:364.500px;top:6px" width="15" height="18"><use href="#tr"/></svg></div>
<div class="r" style="top:328.900px"><div class="sw o"></div><div class="cb"><span class="ch">US<svg style="right:11px;top:5.500px" width="9" height="9"><use href="#xx"/></svg></span><svg style="left:292px;top:11px;color:#4a4f5a" width="10" height="7"><use href="#cv"/></svg></div><svg style="left:364.500px;top:6px" width="15" height="18"><use href="#tr"/></svg></div>
<div class="r" style="top:368.200px"><div class="sw q"></div><div class="cb"><span class="ch">ID<svg style="right:11px;top:5.500px" width="9" height="9"><use href="#xx"/></svg></span><svg style="left:292px;top:11px;color:#4a4f5a" width="10" height="7"><use href="#cv"/></svg></div><svg style="left:364.500px;top:6px" width="15" height="18"><use href="#tr"/></svg></div>
<div class="r" style="top:407.500px"><div class="sw u"></div><div class="cb"><span class="ch">BR<svg style="right:11px;top:5.500px" width="9" height="9"><use href="#xx"/></svg></span><svg style="left:292px;top:11px;color:#4a4f5a" width="10" height="7"><use href="#cv"/></svg></div><svg style="left:364.500px;top:6px" width="15" height="18"><use href="#tr"/></svg></div>
<div class="r" style="top:446.800px"><div class="sw y"></div><div class="cb"><span class="ch">BD<svg style="right:11px;top:5.500px" width="9" height="9"><use href="#xx"/></svg></span><svg style="left:292px;top:11px;color:#4a4f5a" width="10" height="7"><use href="#cv"/></svg></div><svg style="left:364.500px;top:6px" width="15" height="18"><use href="#tr"/></svg></div>
<div class="r" style="top:486.100px"><div class="sw n"></div><div class="cb"><span class="ch">NG<svg style="right:11px;top:5.500px" width="9" height="9"><use href="#xx"/></svg></span><svg style="left:292px;top:11px;color:#4a4f5a" width="10" height="7"><use href="#cv"/></svg></div><svg style="left:364.500px;top:6px" width="15" height="18"><use href="#tr"/></svg></div>
<div class="r" style="top:525.400px"><div class="sw e"></div><div class="cb"><span class="ch">PK<svg style="right:11px;top:5.500px" width="9" height="9"><use href="#xx"/></svg></span><svg style="left:292px;top:11px;color:#4a4f5a" width="10" height="7"><use href="#cv"/></svg></div><svg style="left:364.500px;top:6px" width="15" height="18"><use href="#tr"/></svg></div>
<div class="r" style="top:564.700px"><div class="sw o"></div><div class="cb"><span class="ch">RU<svg style="right:11px;top:5.500px" width="9" height="9"><use href="#xx"/></svg></span><svg style="left:292px;top:11px;color:#4a4f5a" width="10" height="7"><use href="#cv"/></svg></div><svg style="left:364.500px;top:6px" width="15" height="18"><use href="#tr"/></svg></div>
<div class="r" style="top:604px"><div class="sw q"></div><div class="cb"><span class="ch">MX<svg style="right:11px;top:5.500px" width="9" height="9"><use href="#xx"/></svg></span><svg style="left:292px;top:11px;color:#4a4f5a" width="10" height="7"><use href="#cv"/></svg></div><svg style="left:364.500px;top:6px" width="15" height="18"><use href="#tr"/></svg></div>
<div class="r" style="top:643.300px"><div class="sw u"></div><div class="cb"><span class="ch">JP<svg style="right:11px;top:5.500px" width="9" height="9"><use href="#xx"/></svg></span><svg style="left:292px;top:11px;color:#4a4f5a" width="10" height="7"><use href="#cv"/></svg></div><svg style="left:364.500px;top:6px" width="15" height="18"><use href="#tr"/></svg></div>
<div class="r" style="top:682.600px"><div class="sw y"></div><div class="cb"><span class="ch">FR<svg style="right:11px;top:5.500px" width="9" height="9"><use href="#xx"/></svg></span><svg style="left:292px;top:11px;color:#4a4f5a" width="10" height="7"><use href="#cv"/></svg></div><svg style="left:364.500px;top:6px" width="15" height="18"><use href="#tr"/></svg></div>
<div class="r" style="top:721.900px"><div class="sw n"></div><div class="cb"><span class="ch">IR<svg style="right:11px;top:5.500px" width="9" height="9"><use href="#xx"/></svg></span><svg style="left:292px;top:11px;color:#4a4f5a" width="10" height="7"><use href="#cv"/></svg></div><svg style="left:364.500px;top:6px" width="15" height="18"><use href="#tr"/></svg></div>
<div class="r" style="top:761.200px"><div class="sw e"></div><div class="cb"><span class="ch">VN<svg style="right:11px;top:5.500px" width="9" height="9"><use href="#xx"/></svg></span><svg style="left:292px;top:11px;color:#4a4f5a" width="10" height="7"><use href="#cv"/></svg></div><svg style="left:364.500px;top:6px" width="15" height="18"><use href="#tr"/></svg></div>
<div class="r" style="top:800.300px"><div class="sw o"></div><div class="cb"><span class="ch">DE<svg style="right:11px;top:5.500px" width="9" height="9"><use href="#xx"/></svg></span><svg style="left:292px;top:11px;color:#4a4f5a" width="10" height="7"><use href="#cv"/></svg></div><svg style="left:364.500px;top:6px" width="15" height="18"><use href="#tr"/></svg></div>
</div></body></html>
